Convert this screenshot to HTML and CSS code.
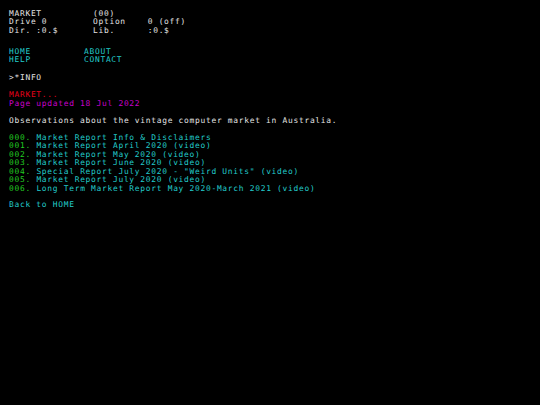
FILE: index.html
```html
<!DOCTYPE html>
<html>
<head>
<meta charset="utf-8">
<link rel="stylesheet" href="styles.css">
</head>
<body>
<div class="screen">
  <div class="status">
    <span class="c1">MARKET</span><span class="c2">(00)</span><span class="c3"></span>
    <span class="c1">Drive 0</span><span class="c2">Option</span><span class="c3">0 (off)</span>
    <span class="c1">Dir. :0.$</span><span class="c2">Lib.</span><span class="c3">:0.$</span>
  </div>
  <div class="nav">
    <span class="link">HOME</span><span class="link">ABOUT</span>
    <span class="link">HELP</span><span class="link">CONTACT</span>
  </div>
  <div class="path">&gt;*INFO</div>
  <div class="title">
    <div class="red">MARKET...</div>
    <div class="magenta">Page updated 18 Jul 2022</div>
  </div>
  <p class="desc">Observations about the vintage computer market in Australia.</p>
  <ul class="list">
    <li><span class="num">000.</span> <span class="link">Market Report Info &amp; Disclaimers</span></li>
    <li><span class="num">001.</span> <span class="link">Market Report April 2020 (video)</span></li>
    <li><span class="num">002.</span> <span class="link">Market Report May 2020 (video)</span></li>
    <li><span class="num">003.</span> <span class="link">Market Report June 2020 (video)</span></li>
    <li><span class="num">004.</span> <span class="link">Special Report July 2020 - "Weird Units" (video)</span></li>
    <li><span class="num">005.</span> <span class="link">Market Report July 2020 (video)</span></li>
    <li><span class="num">006.</span> <span class="link">Long Term Market Report May 2020-March 2021 (video)</span></li>
  </ul>
  <div class="back"><span class="link">Back to HOME</span></div>
</div>
</body>
</html>
```
FILE: styles.css
```css
html, body {
  margin: 0;
  padding: 0;
  background: #000;
}
body {
  width: 540px;
  height: 405px;
  overflow: hidden;
}
.screen {
  padding: 9.5px 0 0 9px;
  font-family: "DejaVu Sans Mono", monospace;
  font-size: 7.9px;
  letter-spacing: 0.72px;
  line-height: 8.5px;
  color: #e4e4e4;
}
.status {
  display: grid;
  grid-template-columns: 84px 54.7px auto;
}
.nav {
  display: grid;
  grid-template-columns: 75px auto;
  margin-top: 12.5px;
}
.link {
  color: #22cccc;
}
.path {
  margin-top: 9.7px;
}
.title {
  margin-top: 8.75px;
}
.red {
  color: #e8001a;
}
.magenta {
  color: #cc00cc;
}
.desc {
  margin: 8.5px 0 0;
}
.list {
  list-style: none;
  margin: 8.5px 0 0;
  padding: 0;
}
.list li {
  line-height: 8.45px;
}
.num {
  color: #22cc22;
}
.back {
  margin-top: 7.5px;
}
```
